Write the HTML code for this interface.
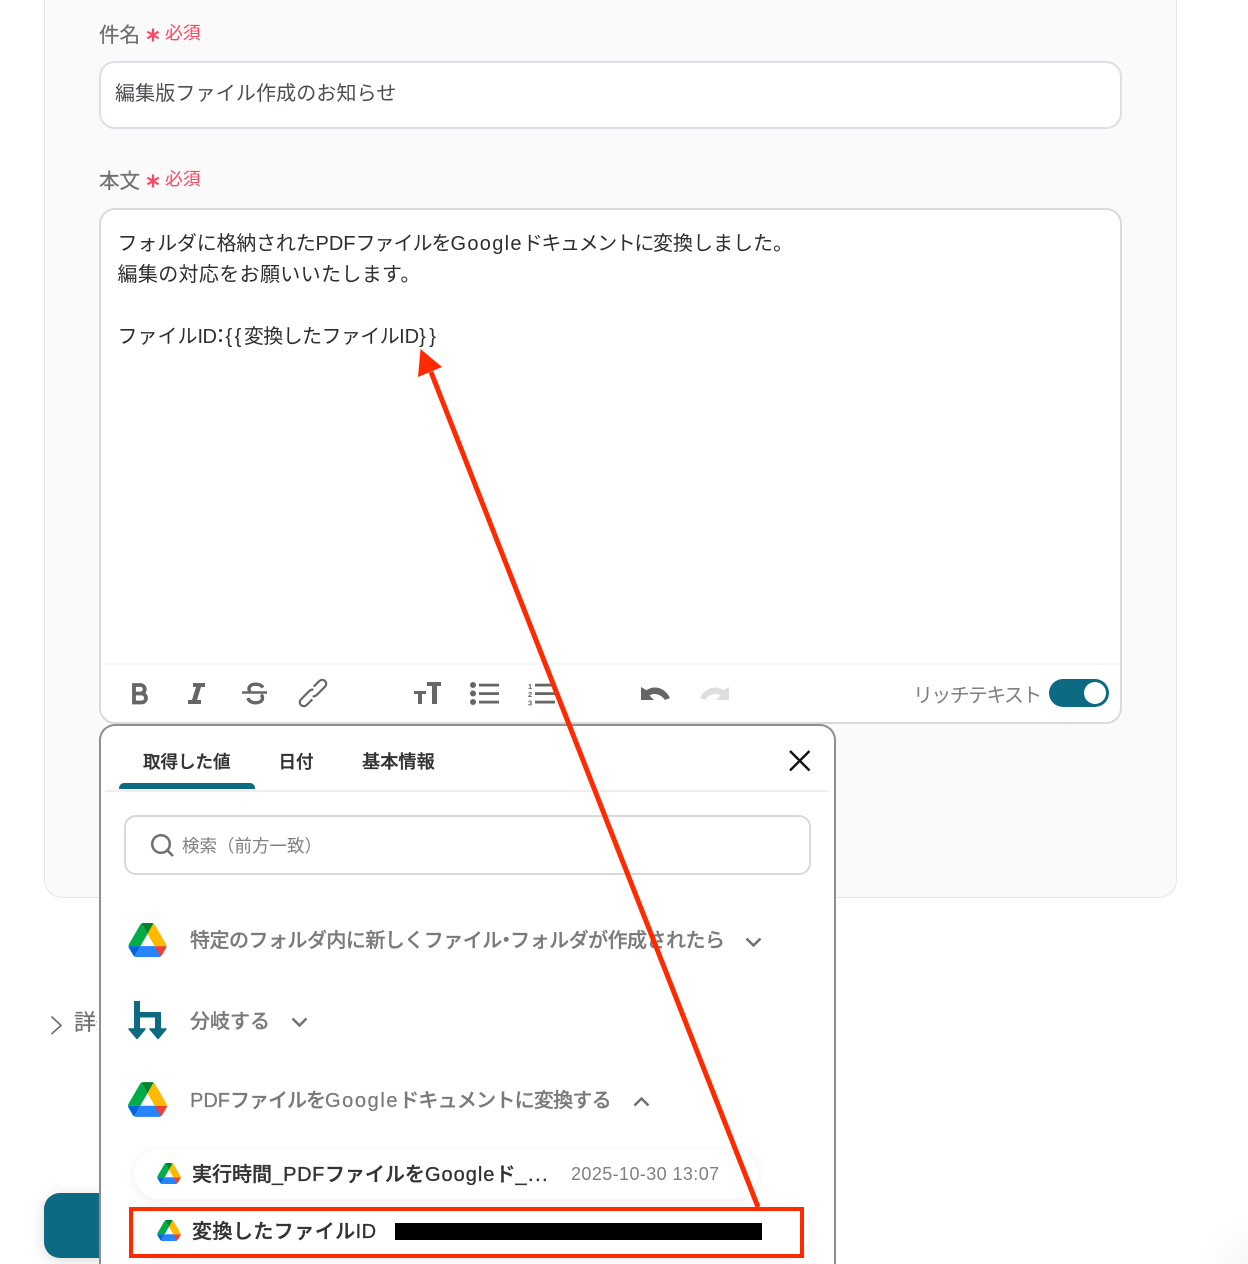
<!DOCTYPE html>
<html lang="ja"><head><meta charset="utf-8">
<style>
html,body{margin:0;padding:0;background:#fff;width:1248px;height:1264px;overflow:hidden}
body{position:relative;font-family:"Liberation Sans","Noto Sans CJK JP",sans-serif;color:#444}
#w{position:absolute;left:0;top:0;width:1248px;height:1264px;overflow:hidden}
.a{position:absolute;white-space:nowrap}
.m{-webkit-text-stroke:.25px currentColor}
.b{-webkit-text-stroke:.35px currentColor}
svg{display:block;overflow:visible}
</style></head><body>
<svg width="0" height="0" style="position:absolute"><defs>
<symbol id="drive" viewBox="0 0 87.3 78">
<path d="m6.6 66.85 3.85 6.65c.8 1.4 1.95 2.5 3.3 3.3l13.75-23.8h-27.5c0 1.55.4 3.1 1.2 4.5z" fill="#0066da"/>
<path d="m43.65 25-13.75-23.8c-1.35.8-2.5 1.9-3.3 3.3l-25.4 44a9.06 9.06 0 0 0 -1.2 4.5h27.5z" fill="#00ac47"/>
<path d="m73.55 76.8c1.35-.8 2.5-1.9 3.3-3.3l1.6-2.75 7.65-13.25c.8-1.4 1.2-2.95 1.2-4.5h-27.502l5.852 11.5z" fill="#ea4335"/>
<path d="m43.65 25 13.75-23.8c-1.35-.8-2.9-1.2-4.5-1.2h-18.5c-1.6 0-3.15.45-4.5 1.2z" fill="#00832d"/>
<path d="m59.8 53h-32.3l-13.75 23.8c1.35.8 2.9 1.2 4.5 1.2h50.8c1.6 0 3.15-.45 4.5-1.2z" fill="#2684fc"/>
<path d="m73.4 26.5-12.7-22c-.8-1.4-1.95-2.5-3.3-3.3l-13.75 23.8 16.15 28h27.45c0-1.55-.4-3.1-1.2-4.5z" fill="#ffba00"/>
</symbol></defs></svg>
<div id="w">
<div class="a" style="left:44px;top:0;width:1131px;height:897px;background:#fafafa;border:1px solid #e6e6e6;border-top:none;border-radius:0 0 18px 18px"></div>

<div class="a m" style="left:99px;top:21px;font-size:20.500px;line-height:29px;color:#707070">件名</div>
<svg class="a" style="left:146px;top:28px" width="14" height="14" viewBox="0 0 14 14"><path d="M7 .5v13M1.400 3.700l11.200 6.600M12.600 3.700L1.400 10.300" stroke="#ff4560" stroke-width="2.200"/></svg>
<div class="a" style="left:165px;top:20px;font-size:17.800px;line-height:26px;color:#ff4560">必須</div>
<div class="a" style="left:99px;top:61px;width:1019px;height:64px;background:#fff;border:2px solid #dcdfe5;border-radius:16px"></div>
<div class="a" style="left:115px;top:79px;font-size:20px;line-height:30px;color:#4b4f54;letter-spacing:.14px">編集版ファイル作成のお知らせ</div>

<div class="a m" style="left:99px;top:167px;font-size:20.500px;line-height:29px;color:#707070">本文</div>
<svg class="a" style="left:146px;top:174px" width="14" height="14" viewBox="0 0 14 14"><path d="M7 .5v13M1.400 3.700l11.200 6.600M12.600 3.700L1.400 10.300" stroke="#ff4560" stroke-width="2.200"/></svg>
<div class="a" style="left:165px;top:166px;font-size:17.800px;line-height:26px;color:#ff4560">必須</div>
<div class="a" style="left:99px;top:208px;width:1019px;height:512px;background:#fff;border:2px solid #dadada;border-radius:16px"></div>
<div class="a" style="left:117.500px;top:229px;font-size:20px;line-height:31px;color:#2e2e2e"><span style="letter-spacing:-.2px">フォルダに格納された</span>PDF<span style="letter-spacing:-1px">ファイルを</span><span style="letter-spacing:1.300px">Google</span><span style="letter-spacing:-1.400px">ドキュメントに</span>変換しました。<br><span style="letter-spacing:.35px">編集の対応をお願いいたします。</span><br><br>ファイル<span style="display:inline-block;width:17px;letter-spacing:-.6px">ID</span><span style="display:inline-block;width:15px;margin-left:-4px">：</span><span style="letter-spacing:2.500px">{{</span><span style="letter-spacing:-.6px">変換したファイル</span>ID<span style="letter-spacing:3.500px">}}</span></div>
<div class="a" style="left:101px;top:663px;width:1019px;height:2px;background:#f7f7f7"></div>

<svg class="a" style="left:100px;top:660px" width="660" height="64" viewBox="0 0 660 64">
<g fill="none" stroke="#666">
<path d="M34 25h6.500a4 4 0 0 1 0 8.500H34zm0 8.500h7.500a4.500 4.500 0 0 1 0 9H34z" stroke-width="3.800"/>
<path d="M142 32.500h25" stroke-width="2.600"/>
<path d="M163 27.500c-1.500-2.200-4-3.300-7.500-3.300-4 0-6.500 1.900-6.500 4.500 0 1.300.5 2.300 1.300 3M148 38c.8 3 3.800 4.800 7.500 4.800 4.200 0 7-1.800 7-4.800 0-1.500-.5-2.500-1.500-3.300" stroke-width="3.400"/>
<g stroke-width="2.200" transform="rotate(-45 213 33)"><path d="M208 37h-8a4 4 0 0 1 0-8h12a4 4 0 0 1 3.500 2"/><path d="M218 29h8a4 4 0 0 1 0 8h-12a4 4 0 0 1-3.500-2"/></g>
</g>
<g fill="#666">
<path d="M93 23h12v4h-4l-4 13h4v4H88v-4h4l4-13h-3z"/>
<path d="M327 22h14v4h-4v18h-5V26h-5zM314 31h12v3h-4v10h-4V34h-4z"/>
<circle cx="373" cy="25" r="3"/><circle cx="373" cy="33.500" r="3"/><circle cx="373" cy="42" r="3"/>
<rect x="379" y="23.700" width="20" height="2.800"/><rect x="379" y="32.200" width="20" height="2.800"/><rect x="379" y="40.700" width="20" height="2.800"/>
<rect x="435" y="23.700" width="20" height="2.800"/><rect x="435" y="32.200" width="20" height="2.800"/><rect x="435" y="40.700" width="20" height="2.800"/>
<text x="428" y="29" font-size="7.500" font-weight="700" font-family="Liberation Sans">1</text><text x="428" y="37" font-size="7.500" font-weight="700" font-family="Liberation Sans">2</text><text x="428" y="45.500" font-size="7.500" font-weight="700" font-family="Liberation Sans">3</text>
<path d="M541 27v13h13l-4.500-4.500c1.500-1 3-1.500 4.800-1.500 4.200 0 8 2.200 10.700 6l5-2C566.500 31 561 27.500 554.500 27.500c-3 0-5.800 1-8 2.800z"/>
<path fill="#dedede" transform="matrix(-1 0 0 1 1170 0)" d="M541 27v13h13l-4.500-4.500c1.500-1 3-1.500 4.800-1.500 4.200 0 8 2.200 10.700 6l5-2C566.500 31 561 27.500 554.500 27.500c-3 0-5.800 1-8 2.800z"/>
</g></svg>

<div class="a" style="left:913px;top:682px;font-size:20px;line-height:28px;color:#808080;letter-spacing:-1.700px">リッチテキスト</div>
<div class="a" style="left:1049px;top:679px;width:60px;height:28px;background:#0c6a82;border-radius:14px"></div>
<div class="a" style="left:1084px;top:682px;width:22px;height:22px;background:#fff;border-radius:50%"></div>

<!-- primary button -->
<div class="a" style="left:44px;top:1193px;width:80px;height:65px;background:#0c6a82;border-radius:16px;box-shadow:0 3px 14px rgba(0,0,0,.14)"></div>

<!-- detail -->
<svg class="a" style="left:50px;top:1015px" width="14" height="20" viewBox="0 0 14 20"><path d="M1.500 1.500L11 10.500L1.500 19" fill="none" stroke="#707070" stroke-width="1.700"/></svg>
<div class="a m" style="left:74px;top:1007px;width:23px;overflow:hidden;font-size:22px;line-height:32px;color:#707070">詳細</div>

<div class="a" style="left:1200px;top:1215px;width:48px;height:49px;background:radial-gradient(circle at 100% 100%,rgba(0,0,0,.03),rgba(0,0,0,0) 48px)"></div>

<!-- popup -->
<div class="a" style="left:99px;top:724px;width:733px;height:538px;background:#fff;border:2px solid #8f8f8f;border-bottom:none;border-radius:16px 16px 0 0"></div>
<div class="a b" style="left:143px;top:749px;font-size:17.500px;line-height:26px;font-weight:500;color:#333">取得した値</div>
<div class="a b" style="left:278.500px;top:749px;font-size:17.500px;line-height:26px;font-weight:500;color:#333">日付</div>
<div class="a b" style="left:362px;top:749px;font-size:18.200px;line-height:26px;font-weight:500;color:#333">基本情報</div>
<div class="a" style="left:105px;top:790px;width:724px;height:2px;background:#eee"></div>
<div class="a" style="left:119px;top:783px;width:136px;height:6px;background:#0c6a82;border-radius:5px 5px 0 0"></div>
<svg class="a" style="left:788px;top:749px" width="23" height="23" viewBox="0 0 23 23"><path d="M2 2L21.500 21.500M21.500 2L2 21.500" stroke="#111" stroke-width="2.400"/></svg>

<div class="a" style="left:124px;top:815px;width:683px;height:56px;border:2px solid #d8d8d8;border-radius:12px;background:#fff"></div>
<svg class="a" style="left:150px;top:833px" width="25" height="25" viewBox="0 0 25 25"><circle cx="11" cy="11" r="8.800" fill="none" stroke="#707070" stroke-width="2.500"/><path d="M17.500 17.500L23 23" stroke="#707070" stroke-width="2.500"/></svg>
<div class="a" style="left:182px;top:833px;font-size:17.500px;line-height:26px;color:#808080">検索（前方一致）</div>

<svg class="a" style="left:128px;top:923px" width="39" height="34"><use href="#drive"/></svg>
<div class="a m" style="left:190px;top:926px;font-size:20px;line-height:30px;font-weight:500;color:#7a7a7a;letter-spacing:-.52px">特定のフォルダ内に新しくファイル<span style="margin:0 -5.500px">・</span>フォルダが作成されたら</div>
<svg class="a" style="left:745px;top:937px" width="17" height="11" viewBox="0 0 17 11"><path d="M1.500 1.500L8.500 8.500L15.500 1.500" fill="none" stroke="#707070" stroke-width="2.500"/></svg>

<svg class="a" style="left:128px;top:1000px" width="40" height="40" viewBox="0 0 40 40"><g fill="#0c6a82"><rect x="6" y="1" width="6" height="30"/><rect x="6" y="12" width="27" height="5.500"/><rect x="27" y="12" width="6" height="19"/><path d="M1 29h16l-8 9.500zM22 29h16l-8 9.500z" stroke="#0c6a82" stroke-width="1.500" stroke-linejoin="round"/></g></svg>
<div class="a m" style="left:190px;top:1007px;font-size:20px;line-height:30px;font-weight:500;color:#7a7a7a">分岐する</div>
<svg class="a" style="left:291px;top:1017px" width="17" height="11" viewBox="0 0 17 11"><path d="M1.500 1.500L8.500 8.500L15.500 1.500" fill="none" stroke="#707070" stroke-width="2.500"/></svg>

<svg class="a" style="left:128px;top:1082px" width="39" height="35"><use href="#drive"/></svg>
<div class="a m" style="left:190px;top:1086px;font-size:20px;line-height:30px;font-weight:500;color:#7a7a7a">PDF<span style="letter-spacing:-1px">ファイルを</span><span style="letter-spacing:1.600px">Google</span><span style="letter-spacing:-.75px">ドキュメントに変換する</span></div>
<svg class="a" style="left:633px;top:1096px" width="17" height="11" viewBox="0 0 17 11"><path d="M1.500 9.500L8.500 2.500L15.500 9.500" fill="none" stroke="#707070" stroke-width="2.500"/></svg>

<div class="a" style="left:134px;top:1149px;width:624px;height:50px;background:#fff;border-radius:25px;box-shadow:0 2px 10px rgba(0,0,0,.07)"></div>
<svg class="a" style="left:157px;top:1163px" width="24" height="21"><use href="#drive"/></svg>
<div class="a b" style="left:192px;top:1160px;font-size:20px;line-height:30px;font-weight:500;color:#333">実行時間_<span style="letter-spacing:.6px">PDF</span>ファイルを<span style="letter-spacing:1px">Google</span>ド<span style="letter-spacing:1.500px">_...</span></div>
<div class="a" style="left:571px;top:1161px;font-size:18px;line-height:26px;color:#808080;letter-spacing:.4px">2025-10-30 13:07</div>

<div class="a" style="left:134px;top:1206px;width:676px;height:52px;background:#fff;border-radius:26px;box-shadow:0 2px 10px rgba(0,0,0,.07)"></div>
<svg class="a" style="left:157px;top:1220px" width="24" height="21"><use href="#drive"/></svg>
<div class="a b" style="left:192px;top:1217px;font-size:20px;line-height:30px;font-weight:500;color:#333;letter-spacing:.45px">変換したファイルID</div>
<div class="a" style="left:395px;top:1223px;width:367px;height:17px;background:#000"></div>
<div class="a" style="left:129px;top:1207px;width:667px;height:43px;border:4px solid #ff2a00;"></div>

<svg class="a" style="left:0;top:0" width="1248" height="1264" viewBox="0 0 1248 1264"><path d="M431 372L758 1207" stroke="#ff2a00" stroke-width="5" fill="none"/><path d="M420.500 349L418 377L442 367z" fill="#ff2a00"/></svg>
</div>
</body></html>
